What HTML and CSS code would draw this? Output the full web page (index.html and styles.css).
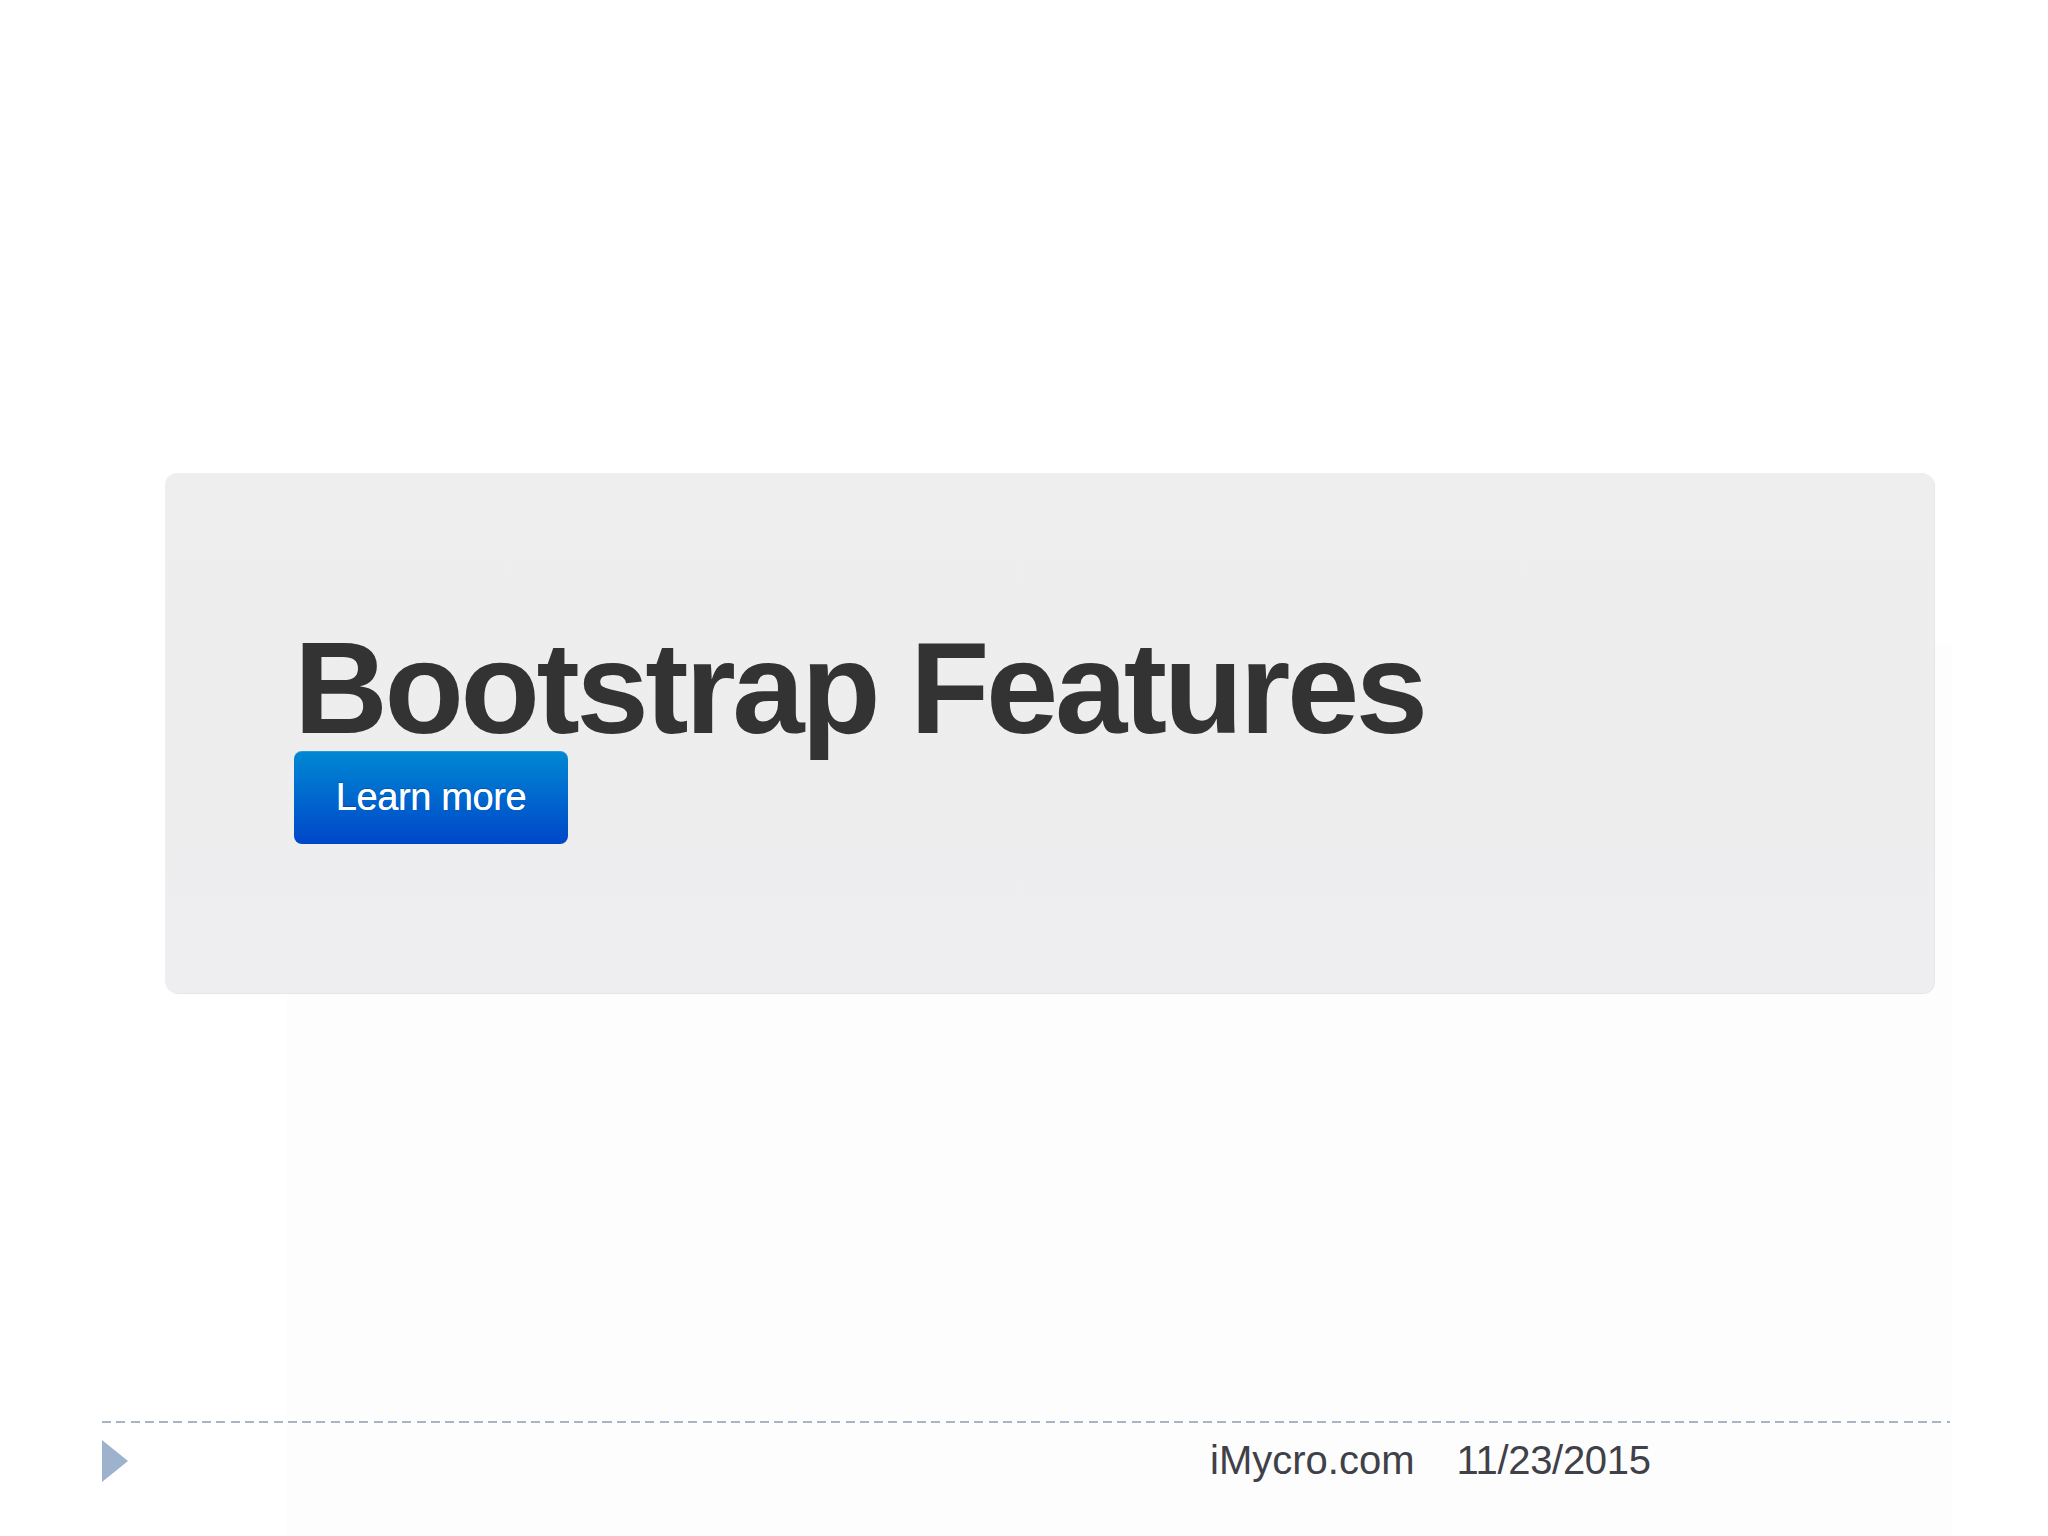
FILE: index.html
```html
<!DOCTYPE html>
<html lang="en">
<head>
<meta charset="utf-8">
<title>Bootstrap Features</title>
<link rel="stylesheet" href="styles.css">
</head>
<body>
<div class="slide">
  <section class="jumbotron">
    <h1 class="title">Bootstrap Features</h1>
    <a class="btn-primary" href="#">Learn more</a>
  </section>
  <footer class="slide-footer">
    <div class="rule"></div>
    <div class="footer-row">
      <svg class="bullet" width="26" height="42" viewBox="0 0 26 42"><polygon points="0,0 26,21 0,42" fill="#9db3cd"/></svg>
      <div class="footer-text">
        <span class="site">iMycro.com</span>
        <span class="date">11/23/2015</span>
      </div>
    </div>
  </footer>
</div>
</body>
</html>
```

FILE: styles.css
```css
html, body {
  margin: 0;
  padding: 0;
}
body {
  width: 2048px;
  height: 1536px;
  overflow: hidden;
  font-family: "Liberation Sans", Arial, sans-serif;
  background: #ffffff;
}
.slide {
  width: 2048px;
  height: 1536px;
  box-sizing: border-box;
  padding-top: 473px;
  display: flex;
  flex-direction: column;
  background:
    linear-gradient(#fdfdfd, #fdfdfd) 287px 643px / 1665px 893px no-repeat,
    #ffffff;
}
.jumbotron {
  margin-left: 165px;
  width: 1769px;
  height: 520px;
  box-sizing: border-box;
  padding: 152px 0 0 129px;
  border-radius: 12px;
  background: linear-gradient(#eeeeee, #eeedef);
  box-shadow: 1px 1px 0 #e6e6e8;
  display: flex;
  flex-direction: column;
  align-items: flex-start;
}
.title {
  margin: 0;
  font-size: 130px;
  line-height: 126px;
  height: 126px;
  font-weight: bold;
  color: #333333;
  letter-spacing: -3.4px;
  white-space: nowrap;
}
.btn-primary {
  display: block;
  width: 274px;
  height: 93px;
  line-height: 93px;
  box-sizing: border-box;
  text-align: center;
  font-size: 38px;
  color: #ffffff;
  text-decoration: none;
  border-radius: 8px;
  background: linear-gradient(#0088d4, #0047c8);
  box-shadow: inset 0 1px 0 rgba(255,255,255,0.15);
  letter-spacing: -0.4px;
  text-shadow: 0 0 0.6px #ffffff, 0 -1px 0 rgba(0,0,0,0.2);
}
.slide-footer {
  margin-top: 428px;
  margin-left: 102px;
  width: 1848px;
}
.rule {
  height: 2px;
  background: repeating-linear-gradient(90deg, #a7b5c5 0 9px, transparent 9px 14.3px);
}
.footer-row {
  display: flex;
  align-items: flex-start;
  margin-top: 17px;
}
.bullet {
  display: block;
  flex: none;
}
.footer-text {
  margin-left: 1082px;
  display: flex;
  gap: 42px;
  font-size: 40px;
  line-height: 40px;
  color: #404048;
  white-space: nowrap;
}
.date {
  letter-spacing: -0.3px;
}
```
